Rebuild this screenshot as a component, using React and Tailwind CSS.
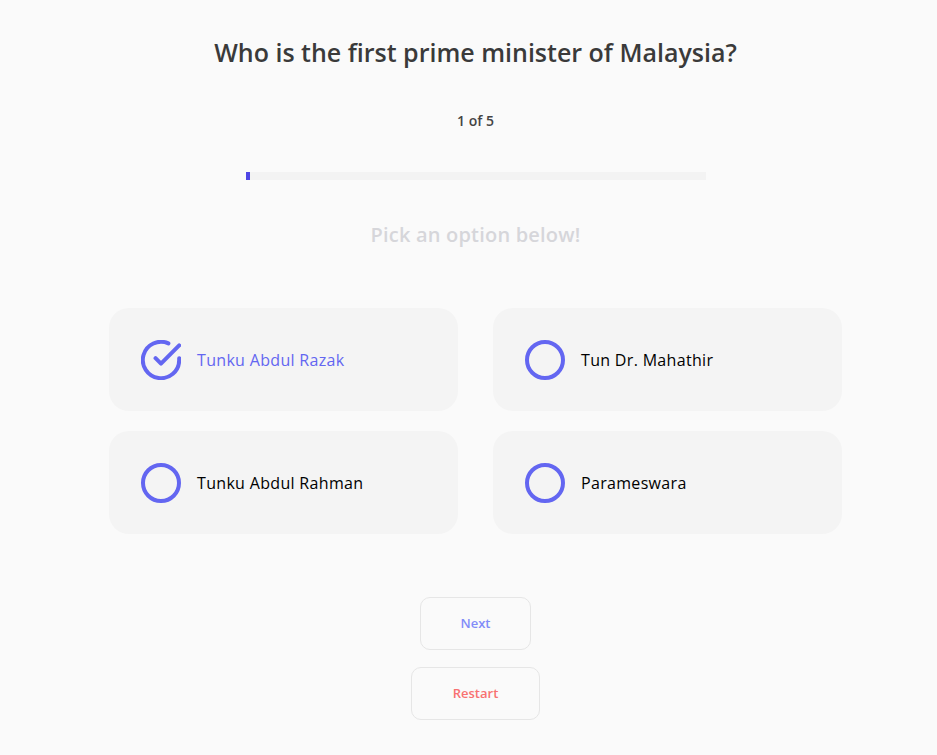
import React from "react";

const font = { fontFamily: '"Open Sans", "Liberation Sans", sans-serif' };

function CheckIcon() {
  return (
    <svg width="40" height="40" viewBox="1 1 22 22" fill="none" stroke="#6366f1" strokeWidth="2.2" strokeLinecap="round" strokeLinejoin="round">
      <path d="M22 11.08V12a10 10 0 1 1-5.93-9.14" />
      <polyline points="22 4 12 14.01 9 11.01" />
    </svg>
  );
}

function Option({ label, selected }) {
  return (
    <div className="h-[103px] rounded-[20px] bg-[#f4f4f4] flex items-center pl-8 gap-4">
      {selected ? (
        <CheckIcon />
      ) : (
        <div className="w-10 h-10 rounded-full border-4 border-[#6366f1]" />
      )}
      <span className={"text-base tracking-[0.02em] " + (selected ? "text-[#6366f1]" : "text-black")}>{label}</span>
    </div>
  );
}

export default function App() {
  return (
    <div className="min-h-[755px] bg-[#fafafa] flex flex-col items-center pl-[14px]" style={font}>
      <h1 className="mt-[36px] text-[25px] leading-[32px] font-semibold text-[#3a3a3a]">
        Who is the first prime minister of Malaysia?
      </h1>
      <div className="mt-[43px] text-[14px] leading-[20px] font-semibold text-[#444]">1 of 5</div>
      <div className="mt-[41px] w-[460px] h-2 bg-[#f3f3f3]">
        <div className="h-2 w-1 bg-[#4f46e5]" />
      </div>
      <div className="mt-[41px] text-[20px] leading-[28px] font-semibold text-[#d6d6da] tracking-[0.01em]">Pick an option below!</div>
      <div className="mt-[59px] grid grid-cols-[349px_349px] gap-x-[35px] gap-y-[20px]">
        <Option label="Tunku Abdul Razak" selected />
        <Option label="Tun Dr. Mahathir" />
        <Option label="Tunku Abdul Rahman" />
        <Option label="Parameswara" />
      </div>
      <button className="mt-[63px] w-[111px] h-[53px] rounded-[10px] border border-[#e6e6e6] text-[13px] font-semibold text-[#818cf8]">
        Next
      </button>
      <button className="mt-[17px] w-[129px] h-[53px] rounded-[10px] border border-[#e6e6e6] text-[13px] font-semibold text-[#f87171]">
        Restart
      </button>
    </div>
  );
}
